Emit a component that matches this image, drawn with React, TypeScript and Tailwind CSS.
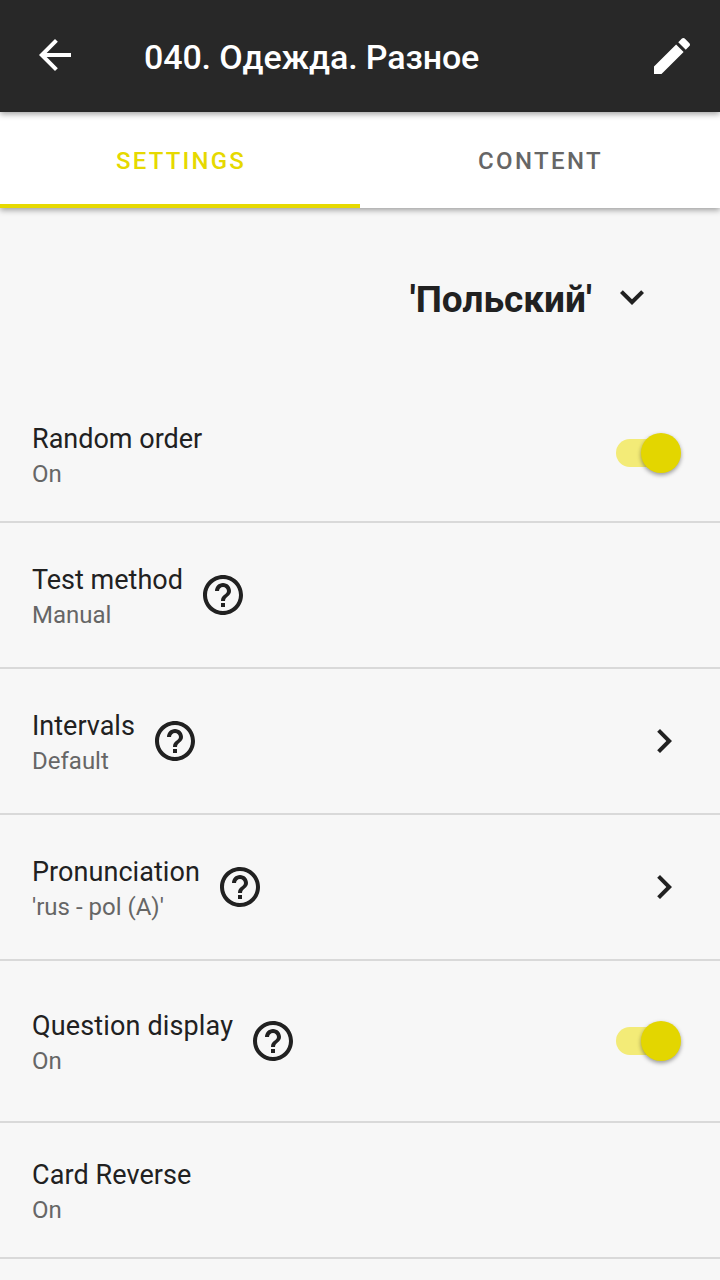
import React from "react";

function HelpIcon() {
  return (
    <svg viewBox="0 0 24 24" className="ml-4 size-12 shrink-0 fill-[#212121]">
      <path d="M11 18h2v-2h-2v2zm1-16C6.480 2 2 6.480 2 12s4.480 10 10 10 10-4.480 10-10S17.520 2 12 2zm0 18c-4.410 0-8-3.590-8-8s3.590-8 8-8 8 3.590 8 8-3.590 8-8 8zm0-14c-2.210 0-4 1.790-4 4h2c0-1.100.900-2 2-2s2 .900 2 2c0 2-3 1.750-3 5h2c0-2.250 3-2.500 3-5 0-2.210-1.790-4-4-4z" />
    </svg>
  );
}

function Chevron() {
  return (
    <svg viewBox="0 0 24 24" className="mr-8 size-12 fill-[#212121]">
      <path d="M8.590 16.590 13.170 12 8.590 7.410 10 6l6 6-6 6z" />
    </svg>
  );
}

function Toggle() {
  return (
    <div className="mr-[38px] flex h-7 w-[66px] items-center">
      <div className="mb-px flex h-7 w-[62px] items-center justify-end rounded-full bg-[#f3eb77]">
        <div className="-mr-[3px] size-[40.500px] shrink-0 rounded-full bg-[#e3d600] shadow-[0_2px_4px_rgba(0,0,0,0.38)]" />
      </div>
    </div>
  );
}

type RowProps = {
  title: string;
  value: string;
  height: string;
  tracking?: string;
  help?: boolean;
  control?: React.ReactNode;
};

function Row({ title, value, height, tracking = "tracking-normal", help, control }: RowProps) {
  return (
    <div className={`flex shrink-0 items-center border-b-2 border-[#d9d9d9] pl-8 ${height}`}>
      <div className="-mb-1.5 whitespace-nowrap">
        <div className={`text-[27px] leading-[35px] text-[#212121] ${tracking}`}>{title}</div>
        <div className="text-[24px] leading-[35px] text-[#666666]">{value}</div>
      </div>
      {help && <HelpIcon />}
      <div className="ml-auto">{control}</div>
    </div>
  );
}

export default function App() {
  return (
    <div className="flex h-[1280px] w-[720px] flex-col overflow-hidden bg-[#f7f7f7] font-['Roboto',sans-serif]">
      <header className="z-20 flex h-28 shrink-0 items-center bg-[#282828] pr-6 pl-[31px] shadow-[0_2px_6px_rgba(0,0,0,0.38)]">
        <svg viewBox="0 0 24 24" className="mb-0.5 size-12 fill-white">
          <path d="M20 11H7.830l5.590-5.590L12 4l-8 8 8 8 1.410-1.410L7.830 13H20v-2z" />
        </svg>
        <h1 className="ml-[65px] pt-0.5 text-[34px] font-medium tracking-[-0.130px] text-white">040. Одежда. Разное</h1>
        <svg viewBox="0 0 24 24" className="ml-auto size-12 fill-white">
          <path d="M3 17.250V21h3.750L17.810 9.940l-3.750-3.750L3 17.250zM20.710 7.040c.390-.390.390-1.020 0-1.410l-2.340-2.340c-.390-.390-1.020-.390-1.410 0l-1.830 1.830 3.750 3.750 1.830-1.830z" />
        </svg>
      </header>
      <nav className="z-10 flex h-24 shrink-0 bg-white text-[24px] font-medium shadow-[0_2px_6px_rgba(0,0,0,0.38)]">
        <div className="flex w-1/2 items-center justify-center border-b-4 border-[#e6d900] pt-1.5 pl-0.5 tracking-[2.200px] text-[#e6d900]">SETTINGS</div>
        <div className="flex w-1/2 items-center justify-center pt-0.5 pl-px tracking-[2.350px] text-[#666666]">CONTENT</div>
      </nav>
      <div className="flex h-[178px] shrink-0 items-center justify-end pr-16">
        <span className="pt-1.5 text-[37px] font-bold text-[#212121]">'Польский'</span>
        <svg viewBox="0 0 24 24" className="ml-[16px] size-12 fill-[#212121]">
          <path d="M7.410 8.590 12 13.170l4.590-4.580L18 10l-6 6-6-6z" />
        </svg>
      </div>
      <main className="flex flex-col">
        <Row title="Random order" value="On" height="h-[137px]" control={<Toggle />} />
        <Row title="Test method" value="Manual" height="h-[146px]" help />
        <Row title="Intervals" value="Default" height="h-[146px]" help control={<Chevron />} />
        <Row title="Pronunciation" value="'rus - pol (A)'" height="h-[146px]" tracking="tracking-[0.060px]" help control={<Chevron />} />
        <Row title="Question display" value="On" height="h-[162px]" tracking="tracking-[0.140px]" help control={<div className="pt-px"><Toggle /></div>} />
        <Row title="Card Reverse" value="On" height="h-[136px]" tracking="tracking-[0.080px]" />
      </main>
    </div>
  );
}
